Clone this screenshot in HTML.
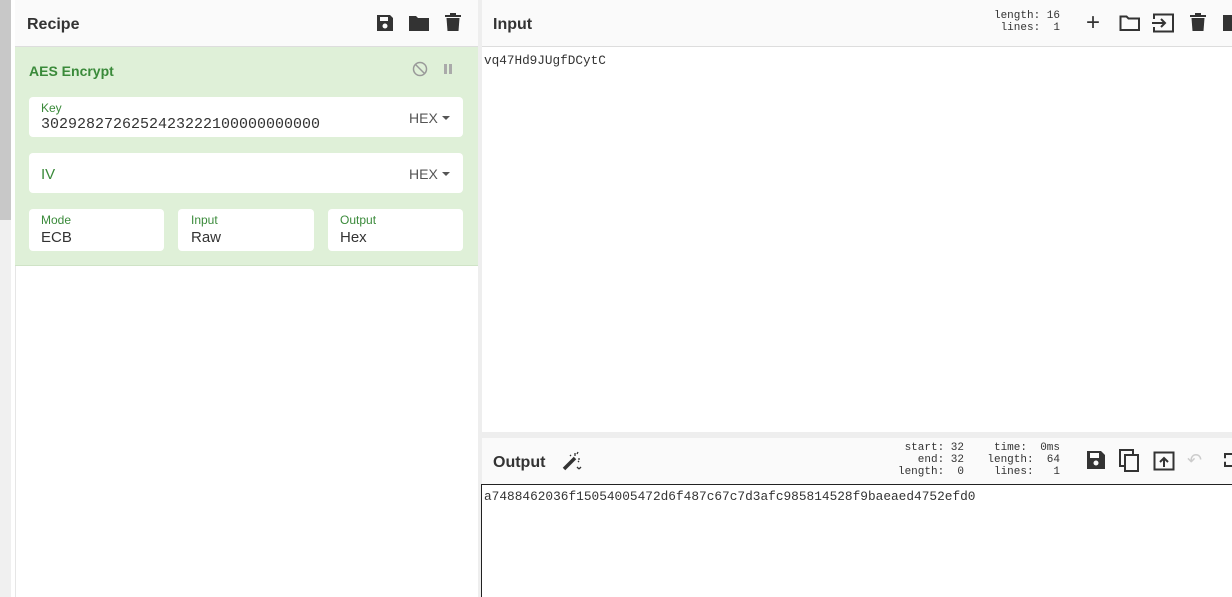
<!DOCTYPE html><html><head><style>
*{margin:0;padding:0;box-sizing:border-box}
body{width:1232px;height:597px;overflow:hidden;background:#fff;font-family:"Liberation Sans",sans-serif;position:relative}
.abs{position:absolute}
.hdr{background:#fafafa;border-bottom:1px solid #ddd;height:47px}
.title{font-weight:bold;font-size:16px;color:#333}
.mono{font-family:"Liberation Mono",monospace}
.box{position:absolute;background:#fff;border-radius:4px}
.lbl{position:absolute;font-size:12px;color:#3a8a3a}
.val{position:absolute;font-size:15px;color:#333}
.hex{position:absolute;font-size:14px;color:#555}
.hex:after{content:"";display:inline-block;margin-left:4px;border-left:4px solid transparent;border-right:4px solid transparent;border-top:4px solid #555;vertical-align:3px}
.stat{font-size:11px;color:#333;line-height:12px;text-align:right;white-space:pre}
</style></head><body>
<div class="abs" style="left:0;top:0;width:11px;height:597px;background:#f0f0f0"></div>
<div class="abs" style="left:0;top:0;width:11px;height:220px;background:#c8c8c8"></div>
<div class="abs" style="left:15px;top:0;width:463px;height:597px;background:#fff;border-left:1px solid #e6e6e6"></div>
<div class="abs hdr" style="left:15px;top:0;width:463px"></div>
<div class="abs title" style="left:27px;top:16px">Recipe</div>
<svg class="abs" style="left:375px;top:13px" width="20" height="20" viewBox="0 0 20 20"><path d="M2 2h13l3 3v13H2z" fill="#333"/><rect x="5" y="4" width="8" height="4" fill="#fafafa"/><circle cx="10" cy="13" r="2.5" fill="#fafafa"/></svg>
<svg class="abs" style="left:408px;top:14px" width="22" height="18" viewBox="0 0 22 18"><path d="M1 2h7l2 2h11v13H1z" fill="#333"/></svg>
<svg class="abs" style="left:444px;top:12px" width="18" height="20" viewBox="0 0 18 20"><rect x="1" y="3" width="16" height="2" fill="#333"/><rect x="6" y="1" width="6" height="2" fill="#333"/><path d="M2.5 6h13l-1 13h-11z" fill="#333"/></svg>
<div class="abs" style="left:15px;top:47px;width:463px;height:219px;background:#dff0d8;border-bottom:1px solid #cfe3c6"></div>
<div class="abs" style="left:29px;top:63px;font-weight:bold;font-size:14px;color:#3a8a3a">AES Encrypt</div>
<svg class="abs" style="left:412px;top:61px" width="16" height="16"><circle cx="8" cy="8" r="6.5" fill="none" stroke="#999" stroke-width="1.5"/><path d="M3.5 3.5l9 9" stroke="#999" stroke-width="1.5"/></svg>
<div class="abs" style="left:444px;top:64px;width:3px;height:10px;background:#aaa"></div>
<div class="abs" style="left:449px;top:64px;width:3px;height:10px;background:#aaa"></div>
<div class="box" style="left:29px;top:97px;width:434px;height:40px"></div>
<div class="lbl" style="left:41px;top:101px">Key</div>
<div class="val mono" style="left:41px;top:116px;font-size:15px">3029282726252423222100000000000</div>
<div class="hex" style="left:409px;top:110px">HEX</div>
<div class="box" style="left:29px;top:153px;width:434px;height:40px"></div>
<div class="val" style="left:41px;top:166px;color:#3a8a3a">IV</div>
<div class="hex" style="left:409px;top:166px">HEX</div>
<div class="box" style="left:29px;top:209px;width:135px;height:42px"></div>
<div class="lbl" style="left:41px;top:213px">Mode</div><div class="val" style="left:41px;top:229px">ECB</div>
<div class="box" style="left:178px;top:209px;width:136px;height:42px"></div>
<div class="lbl" style="left:191px;top:213px">Input</div><div class="val" style="left:191px;top:229px">Raw</div>
<div class="box" style="left:328px;top:209px;width:135px;height:42px"></div>
<div class="lbl" style="left:340px;top:213px">Output</div><div class="val" style="left:340px;top:229px">Hex</div>
<div class="abs" style="left:478px;top:0;width:4px;height:597px;background:#eee"></div>
<div class="abs hdr" style="left:482px;top:0;width:750px"></div>
<div class="abs title" style="left:493px;top:16px">Input</div>
<div class="abs stat mono" style="left:980px;top:10px;width:80px">length: 16
 lines:  1</div>
<div class="abs" style="left:1086px;top:11px;font-size:24px;color:#333;line-height:24px">+</div>
<svg class="abs" style="left:1119px;top:14px" width="22" height="18"><path d="M1.5 2.5h6l2 2h10.5v11.5H1.5z" fill="none" stroke="#333" stroke-width="2"/></svg>
<svg class="abs" style="left:1152px;top:13px" width="24" height="20"><rect x="2" y="1.5" width="19" height="17" fill="none" stroke="#333" stroke-width="2"/><rect x="0" y="6" width="3" height="8" fill="#fafafa"/><path d="M0 10h12M9 6l4 4-4 4" fill="none" stroke="#333" stroke-width="2"/></svg>
<svg class="abs" style="left:1189px;top:12px" width="18" height="20"><rect x="1" y="3" width="16" height="2" fill="#333"/><rect x="6" y="1" width="6" height="2" fill="#333"/><path d="M2.5 6h13l-1 13h-11z" fill="#333"/></svg>
<div class="abs" style="left:1223px;top:15px;width:9px;height:16px;background:#333"></div>
<div class="abs mono" style="left:484px;top:53px;font-size:12.7px;color:#333">vq47Hd9JUgfDCytC</div>
<div class="abs" style="left:482px;top:432px;width:750px;height:6px;background:#eee"></div>
<div class="abs" style="left:482px;top:438px;width:750px;height:46px;background:#fafafa"></div>
<div class="abs title" style="left:493px;top:454px">Output</div>
<svg class="abs" style="left:561px;top:450px" width="22" height="22"><path d="M3 19L14 8" stroke="#333" stroke-width="3.5"/><path d="M14 3v3M17 2l-1 2M9 5l1 1M19 9h-2M18 12l-1-1M20 17l-2 2M16 17l2 2" stroke="#333" stroke-width="1.3"/></svg>
<div class="abs stat mono" style="left:890px;top:442px;width:74px">start: 32
  end: 32
length:  0</div>
<div class="abs stat mono" style="left:978px;top:442px;width:82px">time:  0ms
length:  64
 lines:   1</div>
<svg class="abs" style="left:1086px;top:450px" width="20" height="20" viewBox="0 0 20 20"><path d="M1 1h14l4 4v14H1z" fill="#333"/><rect x="4" y="3" width="9" height="5" fill="#fafafa"/><circle cx="10" cy="13" r="2.5" fill="#fafafa"/></svg>
<svg class="abs" style="left:1119px;top:449px" width="22" height="24"><rect x="1" y="1" width="13" height="16" fill="none" stroke="#333" stroke-width="2"/><rect x="6" y="6" width="13" height="16" fill="#fafafa" stroke="#333" stroke-width="2"/></svg>
<svg class="abs" style="left:1153px;top:451px" width="22" height="20"><rect x="1.5" y="1.5" width="19" height="17" fill="none" stroke="#333" stroke-width="2"/><path d="M11 16V7M7 11l4-4 4 4" fill="none" stroke="#333" stroke-width="2"/></svg>
<div class="abs" style="left:1187px;top:450px;font-size:18px;color:#ccc">↶</div>
<div class="abs" style="left:1224px;top:453px;width:8px;height:14px;border:2px dashed #333;border-right:none"></div>
<div class="abs" style="left:481px;top:484px;width:751px;height:113px;border:1px solid #222;border-right:none;border-bottom:none"></div>
<div class="abs mono" style="left:484px;top:489px;font-size:12.8px;color:#333">a7488462036f15054005472d6f487c67c7d3afc985814528f9baeaed4752efd0</div>
</body></html>
